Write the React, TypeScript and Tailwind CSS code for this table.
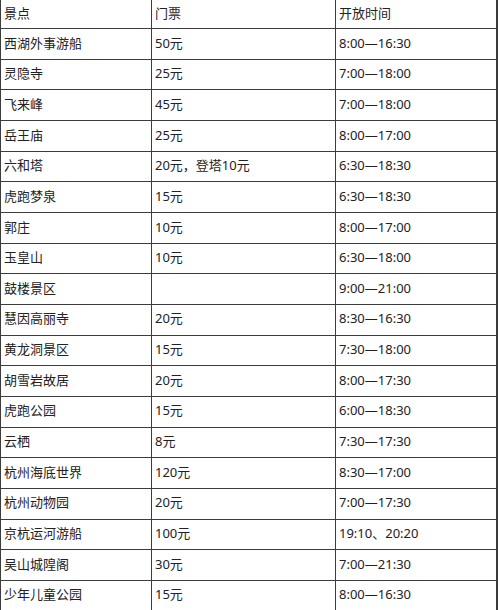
const rows: [string, string, string][] = [
  ['景点', '门票', '开放时间'],
  ['西湖外事游船', '50元', '8:00—16:30'],
  ['灵隐寺', '25元', '7:00—18:00'],
  ['飞来峰', '45元', '7:00—18:00'],
  ['岳王庙', '25元', '8:00—17:00'],
  ['六和塔', '20元，登塔10元', '6:30—18:30'],
  ['虎跑梦泉', '15元', '6:30—18:30'],
  ['郭庄', '10元', '8:00—17:00'],
  ['玉皇山', '10元', '6:30—18:00'],
  ['鼓楼景区', '', '9:00—21:00'],
  ['慧因高丽寺', '20元', '8:30—16:30'],
  ['黄龙洞景区', '15元', '7:30—18:00'],
  ['胡雪岩故居', '20元', '8:00—17:30'],
  ['虎跑公园', '15元', '6:00—18:30'],
  ['云栖', '8元', '7:30—17:30'],
  ['杭州海底世界', '120元', '8:30—17:00'],
  ['杭州动物园', '20元', '7:00—17:30'],
  ['京杭运河游船', '100元', '19:10、20:20'],
  ['吴山城隍阁', '30元', '7:00—21:30'],
  ['少年儿童公园', '15元', '8:00—16:30'],
];

const App = () => {
  return (
    <div className="w-[500px] h-[610px] overflow-hidden bg-white">
      <div
        className="w-[498px] border-l border-r-2 border-[#3c3c3c] text-[13px] text-[#222]"
        style={{ fontFamily: '"Noto Sans", "Noto Sans CJK SC", sans-serif' }}
      >
        {rows.map((r, i) => (
          <div
            key={i}
            className={`flex border-b border-[#3c3c3c] ${i === 0 ? 'h-[29px]' : 'h-[30.67px]'}`}
          >
            <div className="w-[151px] shrink-0 border-r border-[#3c3c3c] pl-[3px] pb-[1px] flex items-center">
              {r[0]}
            </div>
            <div className="w-[184px] shrink-0 border-r border-[#3c3c3c] pl-[3px] pb-[1px] flex items-center">
              {r[1]}
            </div>
            <div className="flex-1 pl-[3px] pb-[1px] flex items-center">{r[2]}</div>
          </div>
        ))}
      </div>
    </div>
  );
};

export default App;
